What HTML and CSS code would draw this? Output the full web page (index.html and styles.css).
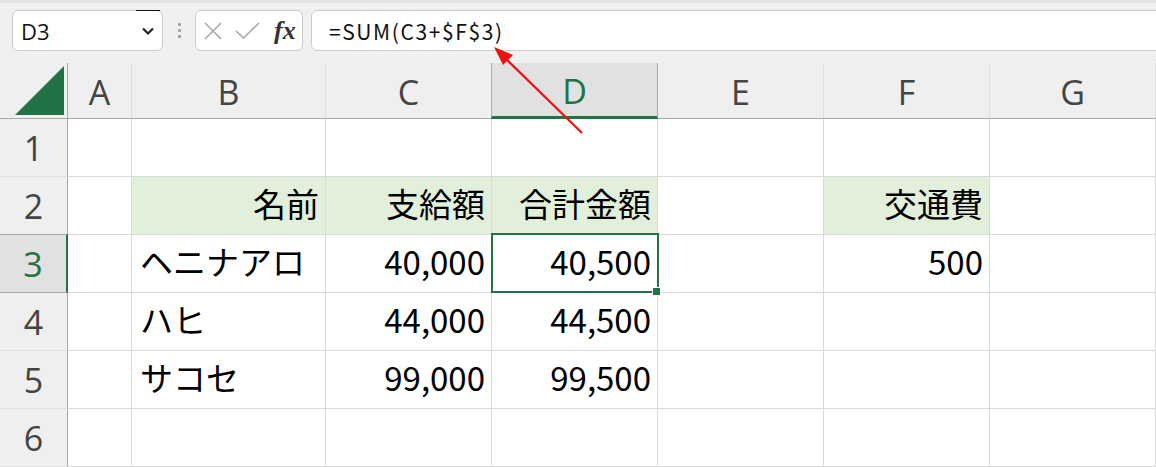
FILE: index.html
```html
<!DOCTYPE html>
<html lang="ja">
<head>
  <meta charset="UTF-8">
  <title>合計金額</title>
  <link rel="stylesheet" href="styles.css">
</head>
<body>
  <div class="toolbar">
    <div class="namebox">
      <span>D3</span>
      <svg class="chevron" width="14" height="10" viewBox="0 0 14 10"><path d="M2 2.5 L7 7.5 L12 2.5" fill="none" stroke="#222" stroke-width="2.2"/></svg>
    </div>
    <div class="grip"><i></i><i></i><i></i></div>
    <div class="fxbox">
      <svg width="20" height="20" viewBox="0 0 20 20"><path d="M2 2 L18 18 M18 2 L2 18" stroke="#a8a8a8" stroke-width="1.6" fill="none"/></svg>
      <svg width="26" height="20" viewBox="0 0 26 20"><path d="M1 10 L8.5 17 L24 2" stroke="#a8a8a8" stroke-width="1.6" fill="none"/></svg>
      <span class="fx">fx</span>
    </div>
    <div class="formula">=SUM(C3+$F$3)</div>
  </div>

  <div class="sheet">
    <div class="corner"><div class="tri"></div></div>
    <div class="colhead">A</div>
    <div class="colhead">B</div>
    <div class="colhead">C</div>
    <div class="colhead active">D</div>
    <div class="colhead">E</div>
    <div class="colhead">F</div>
    <div class="colhead">G</div>
    <div class="colhead"></div>

    <div class="rowhead">1</div>
    <div class="cell"></div><div class="cell"></div><div class="cell"></div><div class="cell"></div>
    <div class="cell"></div><div class="cell"></div><div class="cell"></div><div class="cell"></div>

    <div class="rowhead">2</div>
    <div class="cell"></div>
    <div class="cell fill num">名前</div>
    <div class="cell fill num">支給額</div>
    <div class="cell fill num">合計金額</div>
    <div class="cell"></div>
    <div class="cell fill num">交通費</div>
    <div class="cell"></div><div class="cell"></div>

    <div class="rowhead active">3</div>
    <div class="cell"></div>
    <div class="cell">ヘニナアロ</div>
    <div class="cell num">40,000</div>
    <div class="cell num selected">40,500</div>
    <div class="cell"></div>
    <div class="cell num">500</div>
    <div class="cell"></div><div class="cell"></div>

    <div class="rowhead">4</div>
    <div class="cell"></div>
    <div class="cell">ハヒ</div>
    <div class="cell num">44,000</div>
    <div class="cell num">44,500</div>
    <div class="cell"></div><div class="cell"></div><div class="cell"></div><div class="cell"></div>

    <div class="rowhead">5</div>
    <div class="cell"></div>
    <div class="cell">サコセ</div>
    <div class="cell num">99,000</div>
    <div class="cell num">99,500</div>
    <div class="cell"></div><div class="cell"></div><div class="cell"></div><div class="cell"></div>

    <div class="rowhead">6</div>
    <div class="cell"></div><div class="cell"></div><div class="cell"></div><div class="cell"></div>
    <div class="cell"></div><div class="cell"></div><div class="cell"></div><div class="cell"></div>
  </div>

  <svg class="arrow" width="1156" height="467" viewBox="0 0 1156 467">
    <line x1="582" y1="133" x2="504" y2="57" stroke="#f01010" stroke-width="2.2"/>
    <polygon points="494,47 513,55 503,65" fill="#f01010"/>
  </svg>
</body>
</html>
```

FILE: styles.css
```css
* {
  margin: 0;
  padding: 0;
  box-sizing: border-box;
}

body {
  width: 1156px;
  height: 467px;
  overflow: hidden;
  background: #ffffff;
  font-family: "Noto Sans CJK JP", sans-serif;
  position: relative;
}

.toolbar {
  height: 63px;
  background: #f0f0f0;
  border-top: 3px solid #e3e3e3;
  display: flex;
  align-items: flex-start;
  padding: 7px 0 0 12px;
}

.namebox {
  width: 151px;
  height: 41px;
  background: #ffffff;
  border: 1px solid #cbcbcb;
  border-radius: 6px;
  display: flex;
  align-items: center;
  justify-content: space-between;
  padding: 0 7px 0 8px;
  font-family: "Open Sans", sans-serif;
  font-size: 22px;
  color: #111;
  position: relative;
}

.namebox::after {
  content: "";
  position: absolute;
  top: -1px;
  right: 2px;
  width: 24px;
  height: 1px;
  background: #111;
}

.grip {
  width: 32px;
  height: 41px;
  display: flex;
  flex-direction: column;
  align-items: center;
  justify-content: center;
  gap: 3px;
}

.grip i {
  width: 3px;
  height: 3px;
  background: #a0a0a0;
  border-radius: 1px;
}

.fxbox {
  width: 108px;
  height: 41px;
  background: #ffffff;
  border: 1px solid #cbcbcb;
  border-radius: 6px;
  display: flex;
  align-items: center;
  gap: 12px;
  padding-left: 7px;
}

.fx {
  font-family: "Liberation Serif", serif;
  font-style: italic;
  font-weight: bold;
  font-size: 26px;
  color: #333;
  margin-left: 1px;
  line-height: 1;
}

.formula {
  flex: 1;
  height: 41px;
  margin-left: 8px;
  margin-right: -12px;
  background: #ffffff;
  border: 1px solid #cbcbcb;
  border-radius: 6px;
  font-size: 21px;
  letter-spacing: 1.6px;
  color: #111;
  display: flex;
  align-items: center;
  padding-left: 17px;
}

.sheet {
  display: grid;
  grid-template-columns: 68px 64px 194px 166px 166px 166px 166px 166px 1fr;
  grid-template-rows: 56px repeat(6, 58px) 1fr;
  height: 404px;
}

.corner {
  background: #efefef;
  border-right: 1px solid #a8a8a8;
  border-bottom: 1px solid #a8a8a8;
  display: flex;
  align-items: flex-end;
  justify-content: flex-end;
  padding: 0 3px 3px 0;
}

.tri {
  width: 49px;
  height: 49px;
  background: #217346;
  clip-path: polygon(100% 0, 100% 100%, 0 100%);
}

.colhead {
  background: #efefef;
  border-right: 1px solid #dcdcdc;
  border-bottom: 1px solid #a8a8a8;
  font-family: "Open Sans", sans-serif;
  font-size: 34px;
  color: #444;
  display: flex;
  align-items: center;
  justify-content: center;
  padding-top: 2px;
}

.colhead.active {
  background: #e1e1e1;
  color: #217346;
  border-left: 1px solid #a8a8a8;
  border-right: 1px solid #a8a8a8;
  border-bottom: 3px solid #217346;
  margin-left: -1px;
}

.rowhead {
  background: #efefef;
  border-right: 1px solid #a8a8a8;
  border-bottom: 1px solid #e2e2e2;
  font-family: "Open Sans", sans-serif;
  font-size: 34px;
  color: #444;
  display: flex;
  align-items: center;
  justify-content: center;
}

.rowhead.active {
  background: #e1e1e1;
  color: #217346;
  border-right: 2px solid #217346;
  border-top: 1px solid #a8a8a8;
  border-bottom: 1px solid #a8a8a8;
  margin-top: -1px;
}

.cell {
  background: #ffffff;
  border-right: 1px solid #dadada;
  border-bottom: 1px solid #dadada;
  font-size: 33px;
  line-height: 1;
  color: #000;
  display: flex;
  align-items: center;
  padding: 0 6px 4px 8px;
  white-space: nowrap;
}

.cell.num {
  justify-content: flex-end;
}

.cell.fill {
  background: #e2efda;
}

.cell.selected {
  position: relative;
}

.cell.selected::before {
  content: "";
  position: absolute;
  top: -2px;
  left: -1px;
  right: -2px;
  bottom: -1px;
  border: 2px solid #217346;
}

.cell.selected::after {
  content: "";
  position: absolute;
  right: -4px;
  bottom: -4px;
  width: 7px;
  height: 7px;
  background: #217346;
  border: 1px solid #ffffff;
}

.arrow {
  position: absolute;
  top: 0;
  left: 0;
  pointer-events: none;
}
```
